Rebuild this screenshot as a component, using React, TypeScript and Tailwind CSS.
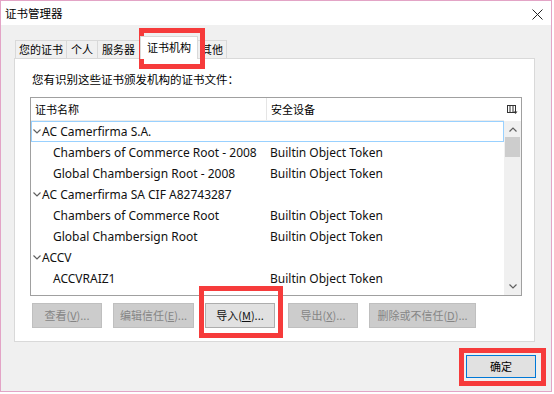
import React from "react";

const CJK = { fontFamily: '"Noto Sans CJK SC", "Noto Sans", sans-serif' };
const LAT = { fontFamily: '"Noto Sans", "Noto Sans CJK SC", sans-serif' };

function Chevron({ up = false }: { up?: boolean }) {
  return (
    <svg width="8" height="5" viewBox="0 0 8 5" className="shrink-0">
      <polyline
        points={up ? "0.5,4.5 4,1 7.5,4.5" : "0.5,0.5 4,4 7.5,0.5"}
        fill="none"
        stroke="#606060"
        strokeWidth="1.2"
      />
    </svg>
  );
}

type Row = { kind: "group" | "child"; name: string; dev?: string; selected?: boolean };

const rows: Row[] = [
  { kind: "group", name: "AC Camerfirma S.A.", selected: true },
  { kind: "child", name: "Chambers of Commerce Root - 2008", dev: "Builtin Object Token" },
  { kind: "child", name: "Global Chambersign Root - 2008", dev: "Builtin Object Token" },
  { kind: "group", name: "AC Camerfirma SA CIF A82743287" },
  { kind: "child", name: "Chambers of Commerce Root", dev: "Builtin Object Token" },
  { kind: "child", name: "Global Chambersign Root", dev: "Builtin Object Token" },
  { kind: "group", name: "ACCV" },
  { kind: "child", name: "ACCVRAIZ1", dev: "Builtin Object Token" },
];

function Btn({
  label,
  mn,
  w,
  enabled = false,
  className = "",
}: {
  label: string;
  mn: string;
  w: string;
  enabled?: boolean;
  className?: string;
}) {
  return (
    <div
      className={`${w} h-[25px] flex items-center justify-center text-[11px] border ${
        enabled
          ? "bg-[#e1e1e1] border-[#adadad] text-[#111]"
          : "bg-[#cccccc] border-[#bfbfbf] text-[#858585]"
      } ${className}`}
      style={CJK}
    >
      <span>
        {label}(<span className="underline">{mn}</span>)...
      </span>
    </div>
  );
}

export default function App() {
  return (
    <div className="w-[554px] h-[394px] bg-white relative overflow-hidden" style={CJK}>
      <div className="w-[552px] h-[392px] border border-[#e3a4c6] flex flex-col bg-[#f0f0f0]">
        {/* title bar */}
        <div className="h-[24px] bg-white flex items-center justify-between pl-[4px] pr-[8px] shrink-0">
          <span className="text-[11.5px] text-black leading-none mt-[2px]">证书管理器</span>
          <svg width="11" height="11" viewBox="0 0 11 11" className="mt-[2px]">
            <path d="M0.5 0.5 L10.5 10.5 M10.5 0.5 L0.5 10.5" stroke="#222" strokeWidth="1" />
          </svg>
        </div>

        <div className="flex-1 flex flex-col pl-[13px] pr-[16px]">
          {/* tabs */}
          <div className="h-[22px] mt-[11px] flex items-end text-[11px] text-black">
            <div className="ml-[1px] w-[52px] h-[18px] border border-b-0 border-[#d9d9d9] bg-[#f0f0f0] flex items-center justify-center">
              您的证书
            </div>
            <div className="w-[31px] h-[18px] border border-b-0 border-l-0 border-[#d9d9d9] bg-[#f0f0f0] flex items-center justify-center">
              个人
            </div>
            <div className="w-[42px] h-[18px] border border-b-0 border-l-0 border-[#d9d9d9] bg-[#f0f0f0] flex items-center justify-center">
              服务器
            </div>
            <div className="relative z-10 w-[58px] h-[23px] -mb-px border border-b-0 border-[#d9d9d9] bg-white flex items-center justify-center pb-[2px]">
              证书机构
            </div>
            <div className="w-[29px] h-[18px] border border-b-0 border-l-0 border-[#d9d9d9] bg-[#f0f0f0] flex items-center justify-center">
              其他
            </div>
          </div>

          {/* panel */}
          <div className="h-[284px] border border-[#d9d9d9] bg-white flex flex-col">
            <div className="h-[14px] mt-[14px] ml-[17px] flex items-center text-[11.5px] text-black">
              您有识别这些证书颁发机构的证书文件：
            </div>

            {/* tree table */}
            <div className="ml-[15px] mt-[10px] w-[492px] h-[199px] border border-[#a0a0a0] flex overflow-hidden">
              <div className="flex-1 flex flex-col overflow-hidden">
                <div className="h-[23px] shrink-0 flex items-center text-[11px] text-black border-b border-[#ececec]">
                  <div className="w-[236px] h-full flex items-center pl-[4px] border-r border-[#e5e5e5]">证书名称</div>
                  <div className="flex-1 pl-[4px]">安全设备</div>
                </div>
                {rows.map((r, i) => (
                  <div
                    key={i}
                    className={`h-[21px] shrink-0 flex items-center text-[12px] text-[#111] ${
                      r.selected ? "border border-[#99d1ff]" : "border border-transparent"
                    }`}
                    style={LAT}
                  >
                    {r.kind === "group" ? (
                      <div className="flex items-center pl-[1px] gap-[1px] whitespace-nowrap">
                        <Chevron />
                        <span>{r.name}</span>
                      </div>
                    ) : (
                      <>
                        <div className="w-[236px] pl-[21px] whitespace-nowrap">{r.name}</div>
                        <div className="flex-1 pl-[2px] whitespace-nowrap">{r.dev}</div>
                      </>
                    )}
                  </div>
                ))}
              </div>
              {/* scrollbar */}
              <div className="w-[17px] shrink-0 flex flex-col bg-[#f0f0f0]">
                <div className="h-[23px] bg-white flex items-center justify-center">
                  <svg width="11" height="10" viewBox="0 0 11 10">
                    <rect x="0.5" y="0.5" width="8" height="7" fill="none" stroke="#333" />
                    <path d="M3 0.5 V7.5 M6 0.5 V7.5" stroke="#333" />
                    <path d="M6.5 6.5 L10.5 6.5 L8.5 9 Z" fill="#333" />
                  </svg>
                </div>
                <div className="h-[16px] flex items-center justify-center">
                  <Chevron up />
                </div>
                <div className="h-[20px] mx-[1px] bg-[#cdcdcd]" />
                <div className="flex-1" />
                <div className="h-[17px] flex items-center justify-center">
                  <Chevron />
                </div>
              </div>
            </div>

            {/* buttons */}
            <div className="mt-[7px] ml-[17px] flex items-center">
              <Btn label="查看" mn="V" w="w-[70px]" />
              <Btn label="编辑信任" mn="E" w="w-[81px]" className="ml-[11px]" />
              <Btn label="导入" mn="M" w="w-[70px]" className="ml-[11px]" enabled />
              <Btn label="导出" mn="X" w="w-[70px]" className="ml-[13px]" />
              <Btn label="删除或不信任" mn="D" w="w-[107px]" className="ml-[11px]" />
            </div>
          </div>

          {/* OK */}
          <div className="mt-[13px] flex justify-end -mr-[1px]">
            <div className="w-[70px] h-[23px] bg-[#e1e1e1] border border-[#0078d7] flex items-center justify-center text-[11px] text-black">
              确定
            </div>
          </div>
        </div>
      </div>

      {/* red annotation boxes */}
      <div className="absolute left-[139px] top-[28px] w-[66px] h-[41px] border-[5px] border-[#f63b3b]" />
      <div className="absolute left-[199px] top-[286px] w-[84px] h-[52px] border-[5px] border-[#f63b3b]" />
      <div className="absolute left-[459px] top-[348px] w-[87px] h-[38px] border-[5px] border-[#f63b3b]" />
    </div>
  );
}
